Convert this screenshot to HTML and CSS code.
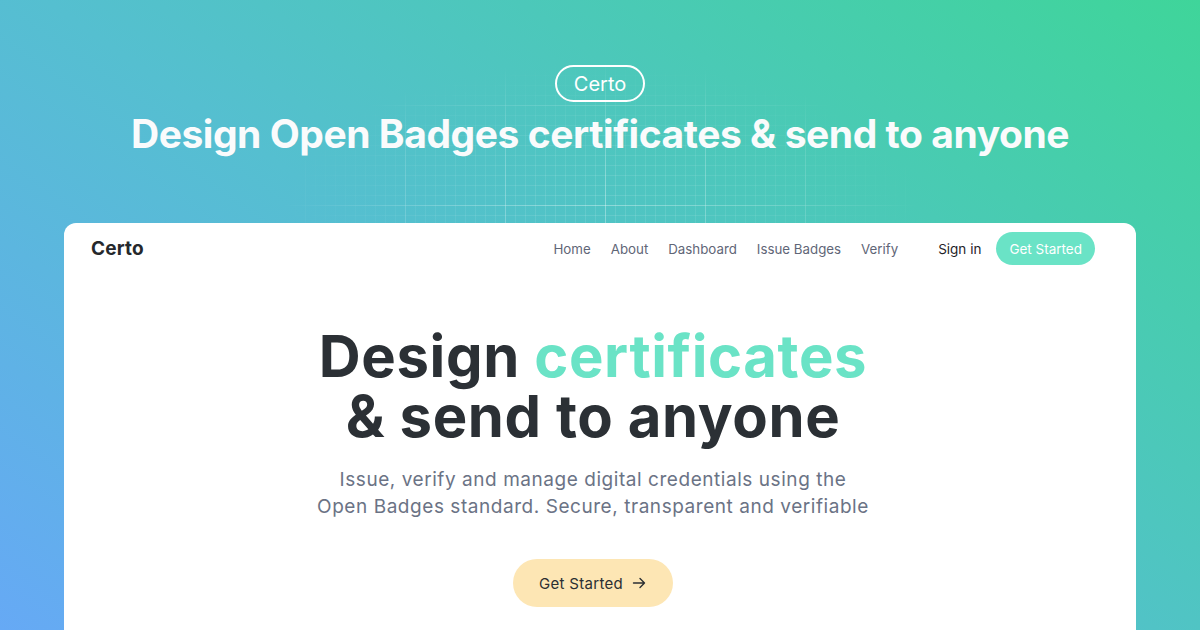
FILE: index.html
```html
<!DOCTYPE html>
<html lang="en">
<head>
<meta charset="utf-8">
<title>Certo</title>
<link rel="stylesheet" href="styles.css">
</head>
<body>
<div class="page">
  <header class="banner">
    <span class="pill">Certo</span>
    <h1 class="banner-title">Design Open Badges certificates &amp; send to anyone</h1>
  </header>
  <main class="card">
    <nav class="nav">
      <div class="logo">Certo</div>
      <div class="nav-right">
        <ul class="links">
          <li>Home</li>
          <li>About</li>
          <li>Dashboard</li>
          <li>Issue Badges</li>
          <li>Verify</li>
        </ul>
        <span class="signin">Sign in</span>
        <span class="nav-cta">Get Started</span>
      </div>
    </nav>
    <section class="hero">
      <h2 class="hero-title">Design <span class="accent">certificates</span><br>&amp; send to anyone</h2>
      <p class="hero-sub">Issue, verify and manage digital credentials using the<br>Open Badges standard. Secure, transparent and verifiable</p>
      <span class="hero-cta">Get Started
        <svg width="16" height="16" viewBox="0 0 16 16" fill="none" stroke="currentColor" stroke-width="1.4" stroke-linecap="round" stroke-linejoin="round"><path d="M2.5 8h11M9 3.5 13.5 8 9 12.5"/></svg>
      </span>
    </section>
  </main>
</div>
</body>
</html>
```
FILE: styles.css
```css
* { box-sizing: border-box; }
html, body { margin: 0; padding: 0; }
body {
  width: 1200px;
  height: 630px;
  overflow: hidden;
  font-family: "Inter", "Liberation Sans", sans-serif;
}
.page {
  position: relative;
  width: 1200px;
  height: 630px;
  background: linear-gradient(35deg, #66a9f5 0%, #55bfd0 45%, #3fd59a 100%);
  display: flex;
  flex-direction: column;
  align-items: center;
}
.page::before {
  content: "";
  position: absolute;
  left: 0; top: 0;
  width: 1200px; height: 630px;
  background-image:
    linear-gradient(to right, rgba(255,255,255,0.28) 1px, transparent 1px),
    linear-gradient(to bottom, rgba(255,255,255,0.28) 1px, transparent 1px),
    linear-gradient(to right, rgba(255,255,255,0.12) 1px, transparent 1px),
    linear-gradient(to bottom, rgba(255,255,255,0.12) 1px, transparent 1px);
  background-size: 100px 100px, 100px 100px, 10px 10px, 10px 10px;
  background-position: 5px 5px, 5px 5px, 5px 5px, 5px 5px;
  -webkit-mask-image: radial-gradient(ellipse 320px 140px at 600px 200px, #000 0%, rgba(0,0,0,0.6) 50%, transparent 100%);
  mask-image: radial-gradient(ellipse 320px 140px at 600px 200px, #000 0%, rgba(0,0,0,0.6) 50%, transparent 100%);
  pointer-events: none;
}
.banner {
  position: relative;
  display: flex;
  flex-direction: column;
  align-items: center;
  padding-top: 65px;
}
.pill {
  display: inline-flex;
  align-items: center;
  justify-content: center;
  height: 37px;
  padding: 0 17px;
  border: 2px solid #fff;
  border-radius: 20px;
  color: #fff;
  font-size: 20px;
  line-height: 1;
}
.banner-title {
  margin: 9px 0 0;
  color: #fafbfc;
  font-size: 39px;
  font-weight: 700;
  line-height: 46px;
  letter-spacing: -0.45px;
}
.card {
  position: relative;
  margin-top: 66px;
  width: 1072px;
  flex: 1;
  background: #fff;
  border-radius: 12px 12px 0 0;
  font-family: "Inter", "Liberation Sans", sans-serif;
}
.nav {
  display: flex;
  align-items: center;
  justify-content: space-between;
  height: 51px;
  padding: 0 41px 0 27px;
}
.logo {
  font-size: 19px;
  font-weight: 700;
  color: #25282c;
  letter-spacing: 0.2px;
}
.nav-right {
  display: flex;
  align-items: center;
}
.links {
  display: flex;
  gap: 20px;
  list-style: none;
  margin: 0 40px 0 0;
  padding: 0;
  font-size: 13.3px;
  color: #5f6677;
}
.signin {
  font-size: 13.5px;
  color: #1f2328;
  margin-right: 15px;
}
.nav-cta {
  display: inline-flex;
  align-items: center;
  height: 33px;
  padding: 0 13px;
  border-radius: 17px;
  background: #6ae3c6;
  color: #fff;
  font-size: 13.5px;
}
.hero {
  display: flex;
  flex-direction: column;
  align-items: center;
  padding: 52px 14px 0 0;
}
.hero-title {
  margin: 0;
  text-align: center;
  font-size: 58px;
  font-weight: 700;
  line-height: 60px;
  color: #2b3035;
  letter-spacing: 0.6px;
}
.accent { color: #6ae3c6; }
.hero-sub {
  margin: 20px 0 0;
  text-align: center;
  font-size: 19px;
  line-height: 27px;
  color: #6b7385;
  letter-spacing: 0.55px;
}
.hero-cta {
  margin-top: 39px;
  display: inline-flex;
  align-items: center;
  gap: 8px;
  height: 48px;
  padding: 0 26px;
  border-radius: 24px;
  background: #fde6b4;
  color: #2b2f33;
  font-size: 15px;
  letter-spacing: 0.3px;
}
```
